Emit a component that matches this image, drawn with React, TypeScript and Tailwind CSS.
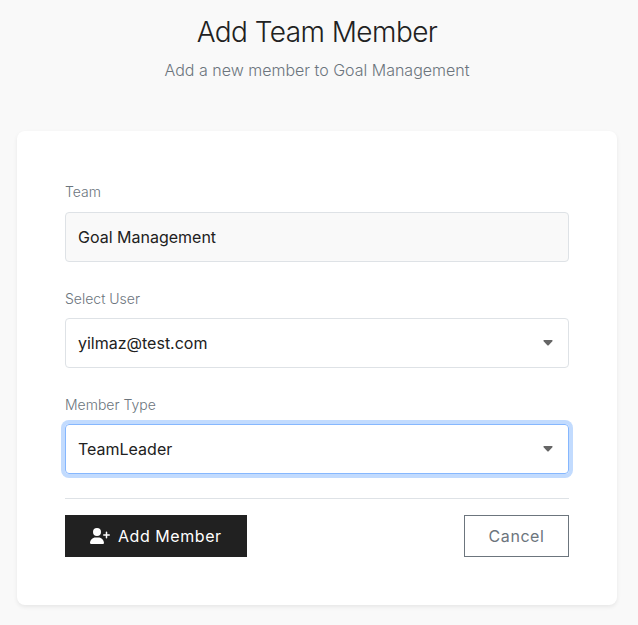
import { FaUserPlus } from "react-icons/fa6";

function Caret() {
  return (
    <svg width="10" height="6" viewBox="0 0 10 6" fill="#666" className="mr-[3px]">
      <path d="M1.2 0h7.6c.8 0 1.1.8.6 1.300L5.700 5.200c-.4.4-1 .4-1.400 0L.6 1.300C.1.800.4 0 1.200 0z" />
    </svg>
  );
}

function Label({ children }: { children: string }) {
  return <div className="h-[21px] text-sm leading-[21px] font-light text-[#6c757d]">{children}</div>;
}

export default function App() {
  return (
    <div className="h-[625px] overflow-hidden bg-[#f9f9f9] pr-[21px] pl-[17px] font-['Inter',sans-serif] text-[#212121]">
      <header className="flex h-[131px] flex-col items-center pt-[15px]">
        <h1 className="text-[28px] leading-[34px] font-light tracking-[-0.56px]">Add Team Member</h1>
        <p className="mt-[9px] text-base leading-6 font-light text-[#6c757d]">Add a new member to Goal Management</p>
      </header>
      <main className="h-[474px] rounded-lg bg-white px-12 pt-[50px] shadow-[0_2px_4px_rgba(0,0,0,0.075)]">
        <Label>Team</Label>
        <div className="mt-[10px] flex h-[50px] items-center rounded-[4px] border border-[#dee2e6] bg-[#f9f9f9] px-3 text-base">Goal Management</div>
        <div className="mt-[26px]"><Label>Select User</Label></div>
        <div className="mt-[9px] flex h-[50px] items-center justify-between rounded-[4px] border border-[#dee2e6] px-3 text-base">yilmaz@test.com<Caret /></div>
        <div className="mt-[26px]"><Label>Member Type</Label></div>
        <div className="mt-[9px] flex h-[50px] items-center justify-between rounded-[4px] border border-[#86b7fe] px-3 text-base shadow-[0_0_0_4px_#c2dbfe]">TeamLeader<Caret /></div>
        <div className="mt-6 flex justify-between border-t border-[#dee2e6] pt-4">
          <button className="flex h-[42px] w-[182px] items-center bg-[#212121] pl-[25px] text-base tracking-[0.55px] text-white">
            <FaUserPlus className="mr-2 h-4 w-5" />
            Add Member
          </button>
          <button className="h-[42px] w-[105px] border border-[#6c757d] text-base tracking-[0.55px] text-[#6c757d]">Cancel</button>
        </div>
      </main>
    </div>
  );
}
